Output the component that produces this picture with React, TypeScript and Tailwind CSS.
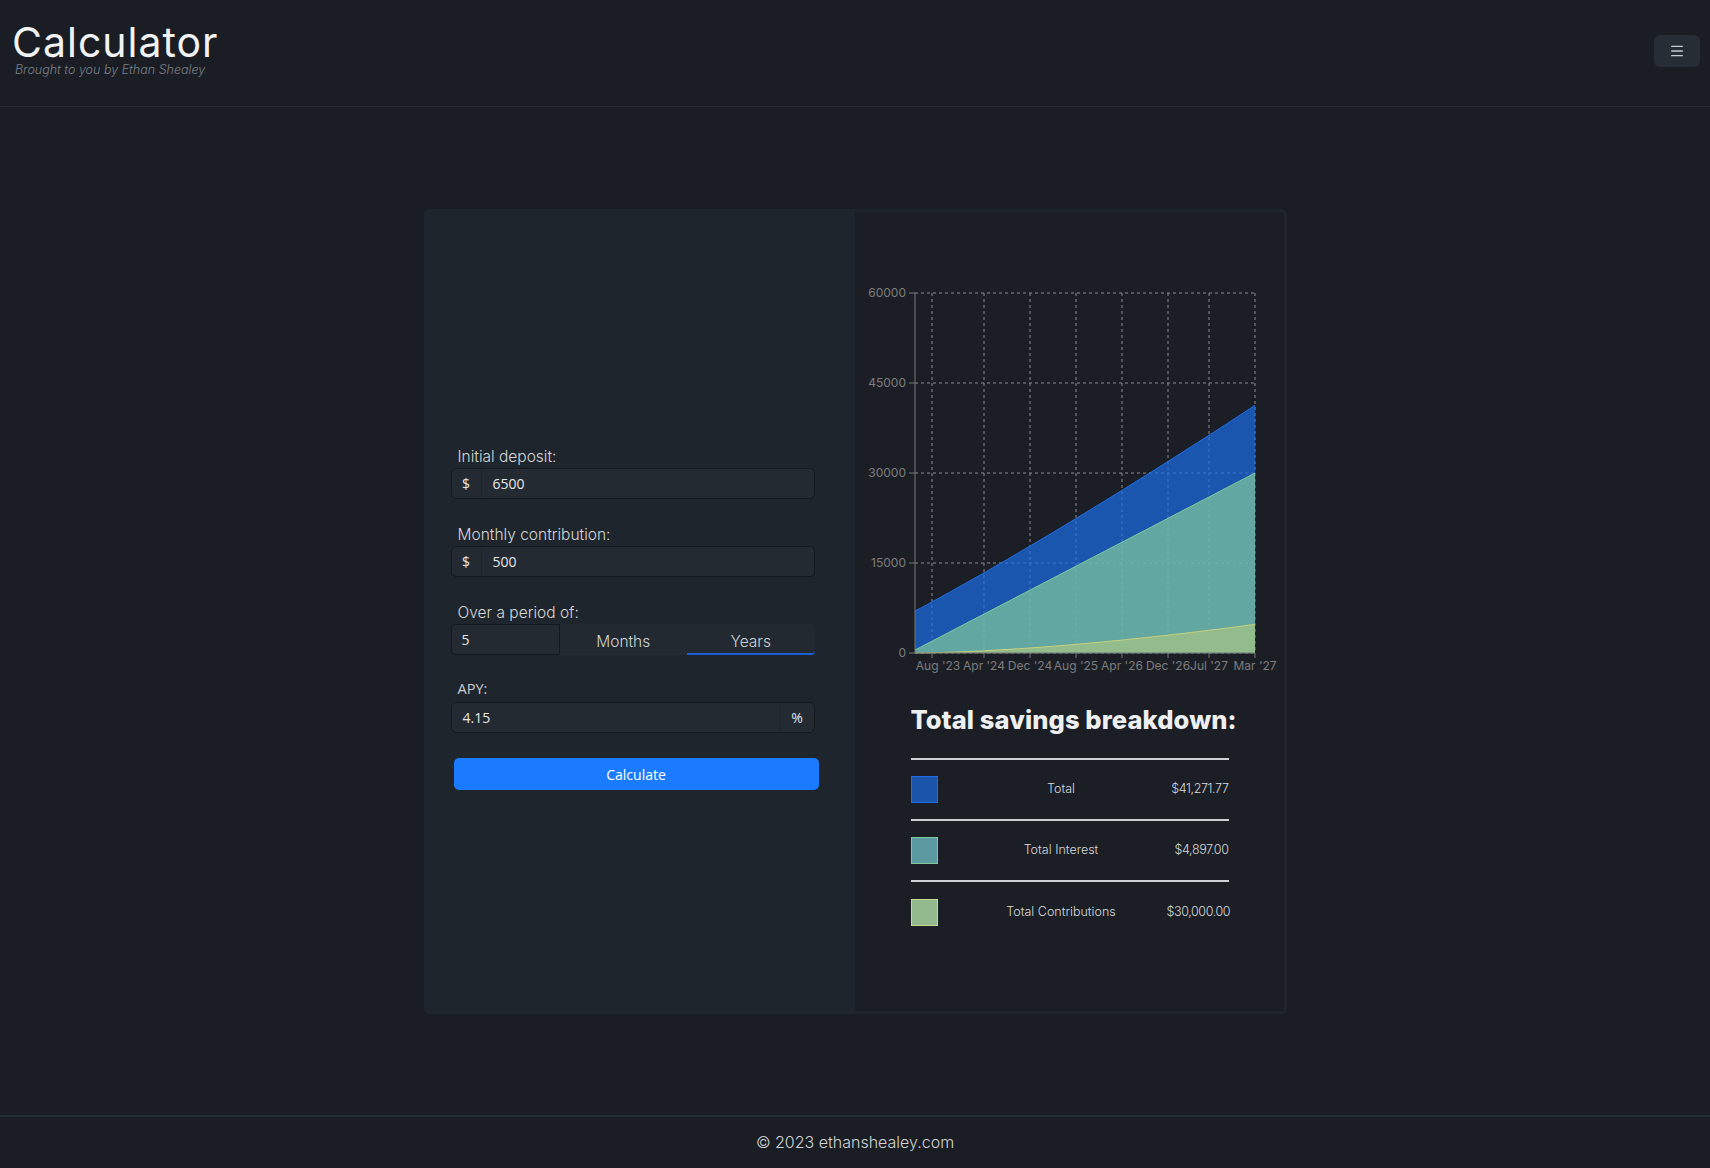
import { Menu } from 'lucide-react';

const POINTS = 60;
const Y_SCALE = 360 / 60000;
const PLOT_LEFT = 60;
const PLOT_RIGHT = 400;
const PLOT_BOTTOM = 382;

const yTicks = [60000, 45000, 30000, 15000, 0];
const xTicks = [
  { x: 77, label: "Aug '23" },
  { x: 129, label: "Apr '24" },
  { x: 175, label: "Dec '24" },
  { x: 221, label: "Aug '25" },
  { x: 267, label: "Apr '26" },
  { x: 313, label: "Dec '26" },
  { x: 354, label: "Jul '27" },
  { x: 400, label: "Mar '27" },
];

const series = Array.from({ length: POINTS }, (_, i) => {
  const t = i / (POINTS - 1);
  const contributions = 500 + 29500 * t;
  const interest = 4771 * Math.pow(t, 1.6);
  return {
    x: PLOT_LEFT + (PLOT_RIGHT - PLOT_LEFT) * t,
    total: 6500 + contributions + interest,
    contributions,
    interest,
  };
});

const toY = (v: number) => PLOT_BOTTOM - v * Y_SCALE;

const areaPath = (key: 'total' | 'contributions' | 'interest') => {
  const top = series.map((p, i) => `${i === 0 ? 'M' : 'L'}${p.x.toFixed(1)},${toY(p[key]).toFixed(1)}`).join(' ');
  return `${top} L${PLOT_RIGHT},${PLOT_BOTTOM} L${PLOT_LEFT},${PLOT_BOTTOM} Z`;
};

const linePath = (key: 'total' | 'contributions' | 'interest') =>
  series.map((p, i) => `${i === 0 ? 'M' : 'L'}${p.x.toFixed(1)},${toY(p[key]).toFixed(1)}`).join(' ');

const breakdown = [
  { name: 'Total', value: '$41,271.77', swatch: 'bg-[#1a55ab] border-[#1f6feb]' },
  { name: 'Total Interest', value: '$4,897.00', swatch: 'bg-[#5a9aa0] border-[#82ca9d]' },
  { name: 'Total Contributions', value: '$30,000.00', swatch: 'bg-[#93b98e] border-[#c9d98f]' },
];

function SavingsChart() {
  return (
    <svg width="429" height="410" className="block">
      {/* grid */}
      {yTicks.map((v) => (
        <line key={v} x1={PLOT_LEFT} x2={PLOT_RIGHT} y1={toY(v)} y2={toY(v)} stroke="#8c8c8c" strokeDasharray="3 3" />
      ))}
      {xTicks.map((t) => (
        <line key={t.label} x1={t.x} x2={t.x} y1={22} y2={PLOT_BOTTOM} stroke="#8c8c8c" strokeDasharray="3 3" />
      ))}

      <path d={areaPath('total')} fill="#1a6ee7" fillOpacity={0.7} />
      <path d={linePath('total')} fill="none" stroke="#1f6feb" strokeWidth={1} />
      <path d={areaPath('contributions')} fill="#82ca9d" fillOpacity={0.7} />
      <path d={linePath('contributions')} fill="none" stroke="#82ca9d" strokeWidth={1} />
      <path d={areaPath('interest')} fill="#a7c583" fillOpacity={0.7} />
      <path d={linePath('interest')} fill="none" stroke="#c9d27a" strokeWidth={1} />

      {/* axes */}
      <line x1={PLOT_LEFT} x2={PLOT_LEFT} y1={22} y2={PLOT_BOTTOM} stroke="#777" />
      <line x1={PLOT_LEFT} x2={PLOT_RIGHT} y1={PLOT_BOTTOM} y2={PLOT_BOTTOM} stroke="#777" />
      {yTicks.map((v) => (
        <g key={v}>
          <line x1={54} x2={PLOT_LEFT} y1={toY(v)} y2={toY(v)} stroke="#777" />
          <text x={51} y={toY(v) + 4} textAnchor="end" fontSize="12" fill="#7d7d7d" fontFamily="Inter, sans-serif">
            {v}
          </text>
        </g>
      ))}
      {xTicks.map((t, i) => (
        <g key={t.label}>
          <line x1={t.x} x2={t.x} y1={PLOT_BOTTOM} y2={PLOT_BOTTOM + 5} stroke="#777" />
          <text
            x={i === 0 ? t.x + 6 : t.x}
            y={PLOT_BOTTOM + 17}
            textAnchor="middle"
            fontSize="12"
            fill="#7d7d7d"
            fontFamily="Inter, sans-serif"
          >
            {t.label}
          </text>
        </g>
      ))}
    </svg>
  );
}

function AddonInput({ prefix, suffix, value }: { prefix?: string; suffix?: string; value: string }) {
  return (
    <div className="flex h-[31px] w-[364px] rounded-[5px] border border-[#15181d] bg-[#242a31] font-['Open_Sans'] text-[14px] text-[#e4e6e8]">
      {prefix && (
        <span className="flex w-[30px] items-center justify-center border-r border-[#20252b]">{prefix}</span>
      )}
      <span className="flex flex-1 items-center pl-[11px]">{value}</span>
      {suffix && (
        <span className="flex w-[34px] items-center justify-center border-l border-[#20252b]">{suffix}</span>
      )}
    </div>
  );
}

function FieldLabel({ children, segoe }: { children: React.ReactNode; segoe?: boolean }) {
  return (
    <div
      className={`h-[22px] pl-[7px] ${
        segoe
          ? "font-['Open_Sans'] text-[14.5px] leading-[17px] text-[#c9ccd0]"
          : 'font-[Inter] text-[15.5px] font-light leading-[22px] text-[#d5d7da]'
      }`}
    >
      {children}
    </div>
  );
}

export default function App() {
  return (
    <div className="flex h-screen flex-col bg-[#1a1d24] text-white">
      <header className="flex h-[107px] shrink-0 items-start justify-between border-b border-[#262c33] pl-[12px] pr-[10px]">
        <div className="pt-[22px]">
          <h1 className="font-[Inter] text-[41px] font-normal leading-none tracking-[1px] text-[#f1f2f3]">
            Calculator
          </h1>
          <p className="ml-[3px] mt-[1px] font-[Inter] text-[12.5px] font-light italic leading-none text-[#7b8087]">
            Brought to you by Ethan Shealey
          </p>
        </div>
        <button className="mt-[35px] flex h-[32px] w-[46px] items-center justify-center rounded-[6px] bg-[#262d34] text-[#c8cbcf]">
          <Menu size={16} strokeWidth={2} />
        </button>
      </header>

      <main className="flex flex-1 items-center justify-center">
        <div className="flex h-[805px] w-[863px] rounded-[5px] bg-[#1f252c]">
          <section className="flex w-[431px] flex-col justify-center pl-[27px] pt-[14px]">
            <div className="flex flex-col gap-[25px]">
              <div>
                <FieldLabel>Initial deposit:</FieldLabel>
                <AddonInput prefix="$" value="6500" />
              </div>
              <div>
                <FieldLabel>Monthly contribution:</FieldLabel>
                <AddonInput prefix="$" value="500" />
              </div>
              <div>
                <FieldLabel>Over a period of:</FieldLabel>
                <div className="flex h-[31px] w-[364px]">
                  <div className="flex w-[109px] items-center rounded-l-[5px] border border-[#15181d] bg-[#242a31] pl-[10px] font-['Open_Sans'] text-[14px] text-[#e4e6e8]">
                    5
                  </div>
                  <div className="flex flex-1 rounded-r-[5px] bg-[#232930] font-[Inter] text-[15.5px] font-light text-[#cfd2d6]">
                    <div className="flex flex-1 items-end justify-center pb-[2px]">Months</div>
                    <div className="flex flex-1 items-end justify-center rounded-br-[4px] border-b-2 border-[#1a5fd6]">
                      Years
                    </div>
                  </div>
                </div>
              </div>
              <div>
                <FieldLabel segoe>APY:</FieldLabel>
                <AddonInput suffix="%" value="4.15" />
              </div>
              <button className="ml-[3px] h-[32px] w-[365px] rounded-[5px] bg-[#1a7bff] font-['Open_Sans'] text-[14px] text-white">
                Calculate
              </button>
            </div>
          </section>

          <section className="my-[3px] mr-[3px] flex flex-1 flex-col bg-[#1b1e25]">
            <div className="mt-[59px]">
              <SavingsChart />
            </div>
            <div className="ml-[56px] w-[318px]">
              <h2 className="mt-[23px] whitespace-nowrap font-[Inter] text-[25.5px] font-extrabold leading-[32px] tracking-[0.1px] text-[#eeeff1]">
                Total savings breakdown:
              </h2>
              <div className="mt-[22px] border-t-2 border-[#cfd0d2]">
                {breakdown.map((row, i) => (
                  <div
                    key={row.name}
                    className={`flex h-[61px] items-center font-[Inter] text-[12.5px] font-light text-[#d8dadd] ${
                      i < breakdown.length - 1 ? 'border-b-2 border-[#cfd0d2]' : ''
                    }`}
                  >
                    <span className={`h-[27px] w-[27px] border ${row.swatch}`} />
                    <span className="flex-1 pl-[18px] text-center">{row.name}</span>
                    <span className="w-[62px] text-right tracking-[-0.4px]">{row.value}</span>
                  </div>
                ))}
              </div>
            </div>
          </section>
        </div>
      </main>

      <footer className="flex h-[53px] shrink-0 items-center justify-center border-t-2 border-[#262c33] pb-[2px] font-[Inter] text-[16px] font-light text-[#d0d3d6]">
        © 2023 ethanshealey.com
      </footer>
    </div>
  );
}
